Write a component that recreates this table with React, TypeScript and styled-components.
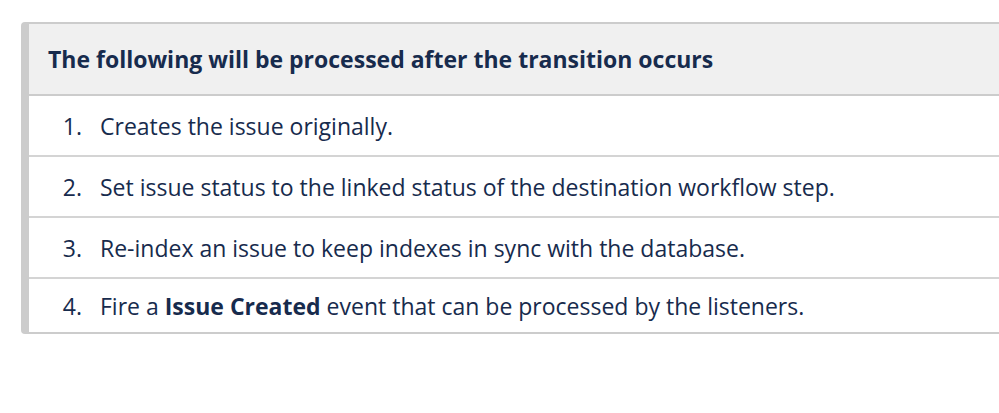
import React from "react";
import styled, { createGlobalStyle } from "styled-components";

const Global = createGlobalStyle`
  html, body { margin: 0; padding: 0; background: #ffffff; overflow: hidden; }
  body { font-family: "Open Sans", "Noto Sans", sans-serif; color: #172b4d; }
`;

const Page = styled.div`
  padding: 22px 0 0 21px;
`;

const Panel = styled.div`
  border-top: 2px solid #cccccc;
  border-bottom: 2px solid #cccccc;
  border-left: 8px solid #cccccc;
  border-radius: 4px 0 0 4px;
`;

const Header = styled.div`
  height: 70px;
  background: #f0f0f0;
  border-bottom: 2px solid #cccccc;
  display: flex;
  align-items: center;
  padding-left: 19px;
  font-size: 23px;
  font-weight: 700;
  color: #172b4d;
  white-space: nowrap;
`;

const List = styled.ol`
  list-style: none;
  margin: 0;
  padding: 0;
`;

const Row = styled.li<{ $last?: boolean }>`
  display: grid;
  grid-template-columns: 53px 1fr;
  column-gap: 18px;
  align-items: center;
  height: ${(p) => (p.$last ? 53 : 59)}px;
  border-bottom: ${(p) => (p.$last ? "none" : "2px solid #d4d4d4")};
  font-size: 23px;
  color: #172b4d;
  white-space: nowrap;
`;

const Num = styled.span`
  text-align: right;
`;

const Strong = styled.strong`
  font-weight: 700;
`;

const items: React.ReactNode[] = [
  "Creates the issue originally.",
  "Set issue status to the linked status of the destination workflow step.",
  "Re-index an issue to keep indexes in sync with the database.",
  <>
    Fire a <Strong>Issue Created</Strong> event that can be processed by the listeners.
  </>,
];

export default function App() {
  return (
    <>
      <Global />
      <Page>
        <Panel>
          <Header>The following will be processed after the transition occurs</Header>
          <List>
            {items.map((it, i) => (
              <Row key={i} $last={i === items.length - 1}>
                <Num>{i + 1}.</Num>
                <span>{it}</span>
              </Row>
            ))}
          </List>
        </Panel>
      </Page>
    </>
  );
}
